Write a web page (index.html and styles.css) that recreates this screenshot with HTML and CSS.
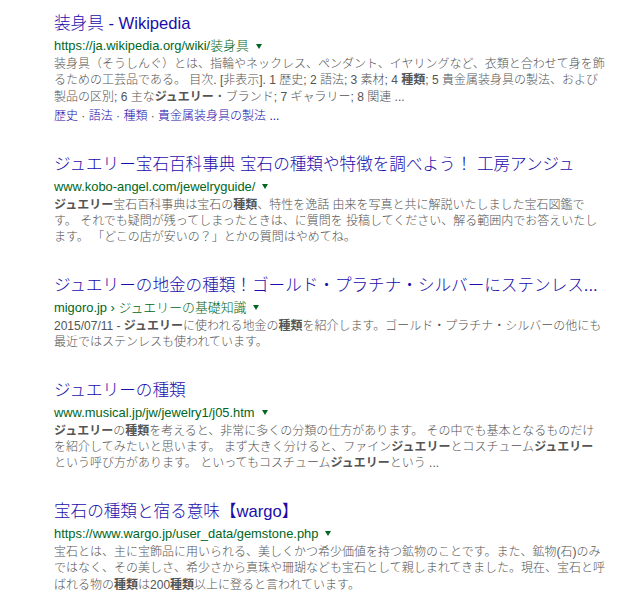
FILE: index.html
```html
<!DOCTYPE html>
<html lang="ja">
<head>
<meta charset="utf-8">
<title>検索結果</title>
<link rel="stylesheet" href="styles.css">
</head>
<body>
<div class="results">
  <div class="result">
    <h3 class="title"><a href="#">装身具 - Wikipedia</a></h3>
    <div class="url"><cite>https://ja.wikipedia.org/wiki/装身具</cite><span class="arrow"></span></div>
    <p class="snippet">装身具（そうしんぐ）とは、指輪やネックレス、ペンダント、イヤリングなど、衣類と合わせて身を飾<br>るための工芸品である。 目次. [非表示]. 1 歴史; 2 語法; 3 素材; 4 <b>種類</b>; 5 貴金属装身具の製法、および<br>製品の区別; 6 主な<b>ジュエリー</b>・ブランド; 7 ギャラリー; 8 関連 ...</p>
    <div class="sitelinks"><a href="#">歴史</a> · <a href="#">語法</a> · <a href="#">種類</a> · <a href="#">貴金属装身具の製法 ...</a></div>
  </div>
  <div class="result">
    <h3 class="title"><a href="#">ジュエリー宝石百科事典 宝石の種類や特徴を調べよう！ 工房アンジュ</a></h3>
    <div class="url"><cite>www.kobo-angel.com/jewelryguide/</cite><span class="arrow"></span></div>
    <p class="snippet"><b>ジュエリー</b>宝石百科事典は宝石の<b>種類</b>、特性を逸話 由来を写真と共に解説いたしました宝石図鑑で<br>す。 それでも疑問が残ってしまったときは、に質問を 投稿してください、解る範囲内でお答えいたし<br>ます。 「どこの店が安いの？」とかの質問はやめてね。</p>
  </div>
  <div class="result">
    <h3 class="title"><a href="#">ジュエリーの地金の種類！ゴールド・プラチナ・シルバーにステンレス...</a></h3>
    <div class="url"><cite>migoro.jp › ジュエリーの基礎知識</cite><span class="arrow"></span></div>
    <p class="snippet">2015/07/11 - <b>ジュエリー</b>に使われる地金の<b>種類</b>を紹介します。ゴールド・プラチナ・シルバーの他にも<br>最近ではステンレスも使われています。</p>
  </div>
  <div class="result">
    <h3 class="title"><a href="#">ジュエリーの種類</a></h3>
    <div class="url"><cite>www.musical.jp/jw/jewelry1/j05.htm</cite><span class="arrow"></span></div>
    <p class="snippet"><b>ジュエリー</b>の<b>種類</b>を考えると、非常に多くの分類の仕方があります。 その中でも基本となるものだけ<br>を紹介してみたいと思います。 まず大きく分けると、ファイン<b>ジュエリー</b>とコスチューム<b>ジュエリー</b><br>という呼び方があります。 といってもコスチューム<b>ジュエリー</b>という ...</p>
  </div>
  <div class="result">
    <h3 class="title"><a href="#">宝石の種類と宿る意味【wargo】</a></h3>
    <div class="url"><cite>https://www.wargo.jp/user_data/gemstone.php</cite><span class="arrow"></span></div>
    <p class="snippet">宝石とは、主に宝飾品に用いられる、美しくかつ希少価値を持つ鉱物のことです。また、鉱物(石)のみ<br>ではなく、その美しさ、希少さから真珠や珊瑚なども宝石として親しまれてきました。現在、宝石と呼<br>ばれる物の<b>種類</b>は200<b>種類</b>以上に登ると言われています。</p>
  </div>
</div>
</body>
</html>
```
FILE: styles.css
```css
html, body {
  margin: 0;
  padding: 0;
  background: #ffffff;
}

body {
  font-family: "Liberation Sans", Arial, "Noto Sans CJK JP", sans-serif;
}

.results {
  display: flex;
  flex-direction: column;
  gap: 29px;
  padding: 13px 0 0 54px;
  width: 580px;
}

.result {
  display: flex;
  flex-direction: column;
}

.title {
  margin: 0;
  font-size: 16.6px;
  font-weight: 300;
  line-height: 22px;
  white-space: nowrap;
}

.title a {
  color: #1a0dab;
  text-decoration: none;
}

.url {
  display: flex;
  align-items: center;
  height: 21px;
  font-size: 12.9px;
  font-weight: 300;
  line-height: 21px;
  white-space: nowrap;
}

.url cite {
  font-style: normal;
  color: #006621;
}

.arrow {
  display: inline-block;
  width: 0;
  height: 0;
  margin-left: 7px;
  margin-top: 1px;
  border-left: 3.5px solid transparent;
  border-right: 3.5px solid transparent;
  border-top: 5px solid #006621;
}

.snippet {
  margin: 0;
  font-size: 12px;
  font-weight: 300;
  line-height: 16.4px;
  color: #545454;
  white-space: nowrap;
}

.snippet b {
  font-weight: bold;
  color: #545454;
}

.sitelinks {
  margin-top: 3px;
  font-size: 12px;
  font-weight: 300;
  line-height: 16.4px;
  color: #545454;
  white-space: nowrap;
}

.sitelinks a {
  color: #1a0dab;
  text-decoration: none;
}
```
